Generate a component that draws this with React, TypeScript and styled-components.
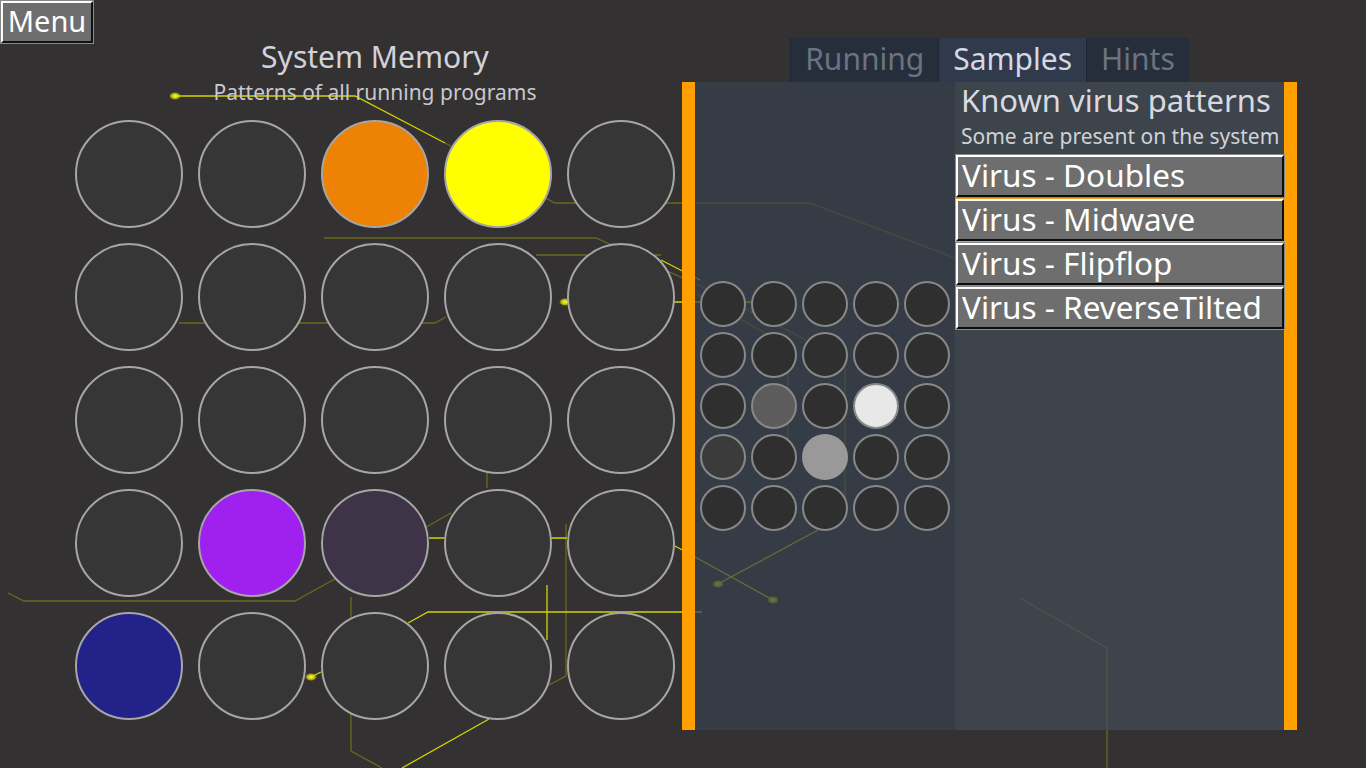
import styled, { createGlobalStyle } from 'styled-components';

const GlobalStyle = createGlobalStyle`
  html, body {
    margin: 0;
    padding: 0;
    background: #333132;
    overflow: hidden;
  }
  * {
    box-sizing: border-box;
  }
`;

const Page = styled.div`
  position: relative;
  width: 1366px;
  height: 768px;
  overflow: hidden;
  background: #333132;
  font-family: 'Noto Sans', 'Open Sans', sans-serif;
  display: flex;
  padding-top: 38px;
`;

const Circuit = styled.svg`
  position: absolute;
  inset: 0;
  z-index: 0;
  pointer-events: none;
`;

const MenuButton = styled.button`
  position: absolute;
  left: 1px;
  top: 1px;
  z-index: 2;
  width: 92px;
  height: 42px;
  padding: 0 0 2px 0;

  background: #6e6e6e;
  border: 2px solid;
  border-color: #ffffff #111111 #111111 #ffffff;
  outline: 1px solid #8a8a8a;

  font-family: inherit;
  font-size: 29px;
  line-height: 36px;
  color: #ffffff;
  cursor: pointer;
`;

const MemoryColumn = styled.section`
  position: relative;
  z-index: 1;
  width: 614px;
  margin-left: 68px;
  display: flex;
  flex-direction: column;
  align-items: center;
`;

const Title = styled.h1`
  margin: 0;
  font-size: 30px;
  font-weight: 400;
  line-height: 38px;
  color: #d2d2da;
`;

const Subtitle = styled.p`
  margin: 0;
  font-size: 21px;
  line-height: 32px;
  color: #c8c8d0;
`;

const MemoryGrid = styled.div`
  margin-top: 12px;
  display: grid;
  grid-template-columns: repeat(5, 108px);
  grid-auto-rows: 108px;
  gap: 15px;
`;

const Cell = styled.div<{ $fill: string }>`
  width: 108px;
  height: 108px;
  border-radius: 50%;
  border: 2px solid #a6a6a6;
  background: ${(p) => p.$fill};
`;

const SideColumn = styled.section`
  position: relative;
  z-index: 1;
  width: 615px;
  display: flex;
  flex-direction: column;
  align-items: center;
`;

const Tabs = styled.div`
  display: flex;
  height: 44px;
  background: #262e3c;
`;

const Tab = styled.div<{ $active?: boolean }>`
  padding: 0 14px;
  font-size: 30px;
  line-height: 42px;
  color: ${(p) => (p.$active ? '#d4d8e0' : '#6b7382')};
  background: ${(p) => (p.$active ? '#2f3a4d' : '#262e3c')};
  border-left: 1px solid #1f2632;
`;

const Panel = styled.div`
  width: 615px;
  height: 648px;
  display: flex;
  border-left: 13px solid #ffa000;
  border-right: 13px solid #ffa000;
`;

const PreviewArea = styled.div`
  width: 260px;
  display: flex;
  align-items: center;
  justify-content: center;
  background: rgba(55, 65, 76, 0.72);
`;

const PreviewGrid = styled.div`
  display: grid;
  grid-template-columns: repeat(5, 46px);
  grid-auto-rows: 46px;
  gap: 5px;
`;

const Dot = styled.div<{ $fill: string }>`
  border-radius: 50%;
  border: 2px solid ${(p) => (p.$fill === '#999999' ? '#999999' : '#888888')};
  background: ${(p) => p.$fill};
`;

const SampleArea = styled.div`
  flex: 1;
  padding: 0 0 0 1px;
  background: rgba(65, 76, 86, 0.72);
`;

const SampleTitle = styled.h2`
  margin: 0 0 0 5px;
  font-size: 31px;
  font-weight: 400;
  line-height: 36px;
  color: #d8dae0;
`;

const SampleHint = styled.p`
  margin: 0 0 1px 5px;
  font-size: 21px;
  line-height: 36px;
  color: #d0d2d8;
`;

const SampleList = styled.div`
  display: flex;
  flex-direction: column;
  gap: 2px;
`;

const SampleItem = styled.div<{ $focused?: boolean }>`
  height: 42px;
  padding: 0 4px;
  background: #6e6e6e;
  border: 2px solid;
  border-color: #ffffff #0c0c0c #0c0c0c #ffffff;
  outline: 1px solid ${(p) => (p.$focused ? '#f0a020' : '#8a8a8a')};
  font-size: 31.5px;
  line-height: 36px;
  color: #ffffff;
  white-space: nowrap;
`;

const memory = [
  ['#363636', '#363636', '#ee8204', '#ffff00', '#363636'],
  ['#363636', '#363636', '#363636', '#363636', '#363636'],
  ['#363636', '#363636', '#363636', '#363636', '#363636'],
  ['#363636', '#a020f0', '#3f3347', '#363636', '#363636'],
  ['#222288', '#363636', '#363636', '#363636', '#363636'],
];

const preview = [
  ['#2f2f2f', '#2f2f2f', '#2f2f2f', '#2f2f2f', '#2f2f2f'],
  ['#2f2f2f', '#2f2f2f', '#2f2f2f', '#2f2f2f', '#2f2f2f'],
  ['#2f2f2f', '#5c5c5c', '#2f2f2f', '#e8e8e8', '#2f2f2f'],
  ['#3b3b3b', '#2f2f2f', '#999999', '#2f2f2f', '#2f2f2f'],
  ['#2f2f2f', '#2f2f2f', '#2f2f2f', '#2f2f2f', '#2f2f2f'],
];

const viruses = ['Virus - Doubles', 'Virus - Midwave', 'Virus - Flipflop', 'Virus - ReverseTilted'];

const bright = [
  'M175 96 H355 L445 143',
  'M565 302 H760',
  'M429 538 H567',
  'M547 585 V640',
  'M408 623 L428 612 H702',
  'M311 677 L321 672',
  'M489 719 L402 768',
  'M675 546 L773 600',
  'M718 584 L818 530',
  'M661 260 L700 280',
];

const dim = [
  'M445 143 L555 203 H810 L955 258',
  'M324 238 H596 L700 286 L806 340',
  'M536 255 H661',
  'M695 293 L765 333',
  'M179 323 H435 L446 317',
  'M8 593 L24 601 H295 L333 580 L451 513',
  'M487 473 V488',
  'M566 524 V676 L549 685',
  'M351 597 V751 L382 768',
  'M788 370 V440',
  'M845 367 V497',
  'M1020 598 L1107 648 V768',
];

const glows = [
  [175, 96],
  [565, 302],
  [311, 677],
  [718, 584],
  [773, 600],
];

const App = () => {
  return (
    <Page>
      <GlobalStyle />

      <Circuit width="1366" height="768" viewBox="0 0 1366 768">
        <defs>
          <radialGradient id="glow">
            <stop offset="0%" stopColor="#ffff40" />
            <stop offset="60%" stopColor="#e0e000" stopOpacity="0.8" />
            <stop offset="100%" stopColor="#e0e000" stopOpacity="0" />
          </radialGradient>
          <linearGradient id="fade" x1="0" x2="1">
            <stop offset="0%" stopColor="#55551c" />
            <stop offset="100%" stopColor="#55551c" stopOpacity="0" />
          </linearGradient>
        </defs>
        {dim.map((d, i) => (
          <path key={'d' + i} d={d} fill="none" stroke="#6a6a1c" strokeWidth="1.3" />
        ))}
        <path d="M8 471 H160" stroke="url(#fade)" strokeWidth="1.3" />
        {bright.map((d, i) => (
          <path key={'b' + i} d={d} fill="none" stroke="#d4d400" strokeWidth="1.3" />
        ))}
        {glows.map(([x, y], i) => (
          <ellipse key={'g' + i} cx={x} cy={y} rx="6" ry="4" fill="url(#glow)" />
        ))}
      </Circuit>

      <MenuButton>Menu</MenuButton>

      <MemoryColumn>
        <Title>System Memory</Title>
        <Subtitle>Patterns of all running programs</Subtitle>
        <MemoryGrid>
          {memory.flat().map((fill, i) => (
            <Cell key={i} $fill={fill} />
          ))}
        </MemoryGrid>
      </MemoryColumn>

      <SideColumn>
        <Tabs>
          <Tab>Running</Tab>
          <Tab $active>Samples</Tab>
          <Tab>Hints</Tab>
        </Tabs>
        <Panel>
          <PreviewArea>
            <PreviewGrid>
              {preview.flat().map((fill, i) => (
                <Dot key={i} $fill={fill} />
              ))}
            </PreviewGrid>
          </PreviewArea>
          <SampleArea>
            <SampleTitle>Known virus patterns</SampleTitle>
            <SampleHint>Some are present on the system</SampleHint>
            <SampleList>
              {viruses.map((name, i) => (
                <SampleItem key={name} $focused={i === 1}>
                  {name}
                </SampleItem>
              ))}
            </SampleList>
          </SampleArea>
        </Panel>
      </SideColumn>
    </Page>
  );
};

export default App;
